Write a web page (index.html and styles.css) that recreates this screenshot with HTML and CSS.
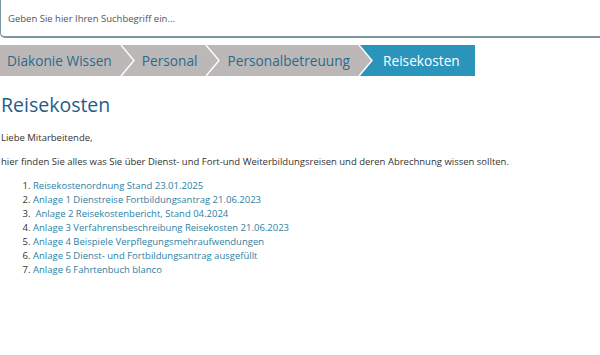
FILE: index.html
```html
<!DOCTYPE html>
<html lang="de">
<head>
    <meta charset="UTF-8">
    <meta name="viewport" content="width=device-width, initial-scale=1.0">
    <title>Reisekosten</title>
    <link rel="stylesheet" href="styles.css">
</head>
<body>
    <!-- Suche -->
    <div class="search">
        <span class="search-placeholder">Geben Sie hier Ihren Suchbegriff ein...</span>
    </div>

    <!-- Breadcrumb -->
    <nav class="crumbs">
        <a class="crumb" href="#">Diakonie Wissen</a>
        <svg class="sep" width="15" height="31" viewBox="0 0 15 31"><path d="M1 0 L14 15.5 L1 31" fill="none" stroke="#fff" stroke-width="1.4"/></svg>
        <a class="crumb" href="#">Personal</a>
        <svg class="sep" width="15" height="31" viewBox="0 0 15 31"><path d="M1 0 L14 15.5 L1 31" fill="none" stroke="#fff" stroke-width="1.4"/></svg>
        <a class="crumb" href="#">Personalbetreuung</a>
        <svg class="sep sep-active" width="15" height="31" viewBox="0 0 15 31"><path d="M0 0 L1 0 L14 15.5 L1 31 L0 31 Z" fill="#bcb8b8"/><path d="M1 0 L14 15.5 L1 31" fill="none" stroke="#fff" stroke-width="1.4"/></svg>
        <span class="crumb active">Reisekosten</span>
    </nav>

    <div class="content">
        <h1>Reisekosten</h1>
        <p>Liebe Mitarbeitende,</p>
        <p>hier finden Sie alles was Sie über Dienst- und Fort-und Weiterbildungsreisen und deren Abrechnung wissen sollten.</p>

        <ol class="docs">
            <li><a href="#">Reisekostenordnung Stand 23.01.2025</a></li>
            <li><a href="#">Anlage 1 Dienstreise Fortbildungsantrag 21.06.2023</a></li>
            <li>&nbsp;<a href="#">Anlage 2 Reisekostenbericht, Stand 04.2024</a></li>
            <li><a href="#">Anlage 3 Verfahrensbeschreibung Reisekosten 21.06.2023</a></li>
            <li><a href="#">Anlage 4 Beispiele Verpflegungsmehraufwendungen</a></li>
            <li><a href="#">Anlage 5 Dienst- und Fortbildungsantrag ausgefüllt</a></li>
            <li><a href="#">Anlage 6 Fahrtenbuch blanco</a></li>
        </ol>
    </div>
</body>
</html>
```

FILE: styles.css
```css
body {
    font-family: "Open Sans", Arial, sans-serif;
    background: #fff;
    color: #333;
    margin: 0;
    padding: 0;
}
.search {
    height: 36px;
    border-left: 1px solid #7d97a2;
    border-bottom: 2px solid #7d97a2;
    border-bottom-left-radius: 5px;
    display: flex;
    align-items: center;
    padding-left: 7px;
}
.search-placeholder {
    font-size: 9.5px;
    color: #555;
}
.crumbs {
    display: flex;
    height: 31px;
    margin-top: 7px;
}
.crumb {
    display: flex;
    align-items: center;
    background: #bcb8b8;
    color: #2c6a8b;
    font-size: 13.7px;
    text-decoration: none;
    padding: 0 8px 1px 7px;
}
.sep {
    display: block;
    background: #bcb8b8;
}
.sep-active {
    background: #2b94bb;
}
.crumb.active {
    background: #2b94bb;
    color: #fff;
    padding: 0 15px 1px 10px;
}
.content {
    padding: 0 1px;
}
h1 {
    font-size: 19.5px;
    font-weight: normal;
    color: #1f5e86;
    margin: 15px 0 13px;
}
p {
    font-size: 9.5px;
    line-height: 13px;
    margin: 0 0 11px;
}
.docs {
    font-size: 9.5px;
    line-height: 14px;
    margin: 11px 0;
    padding-left: 32px;
}
.docs a {
    color: #2c7fa3;
    text-decoration: none;
}
```
